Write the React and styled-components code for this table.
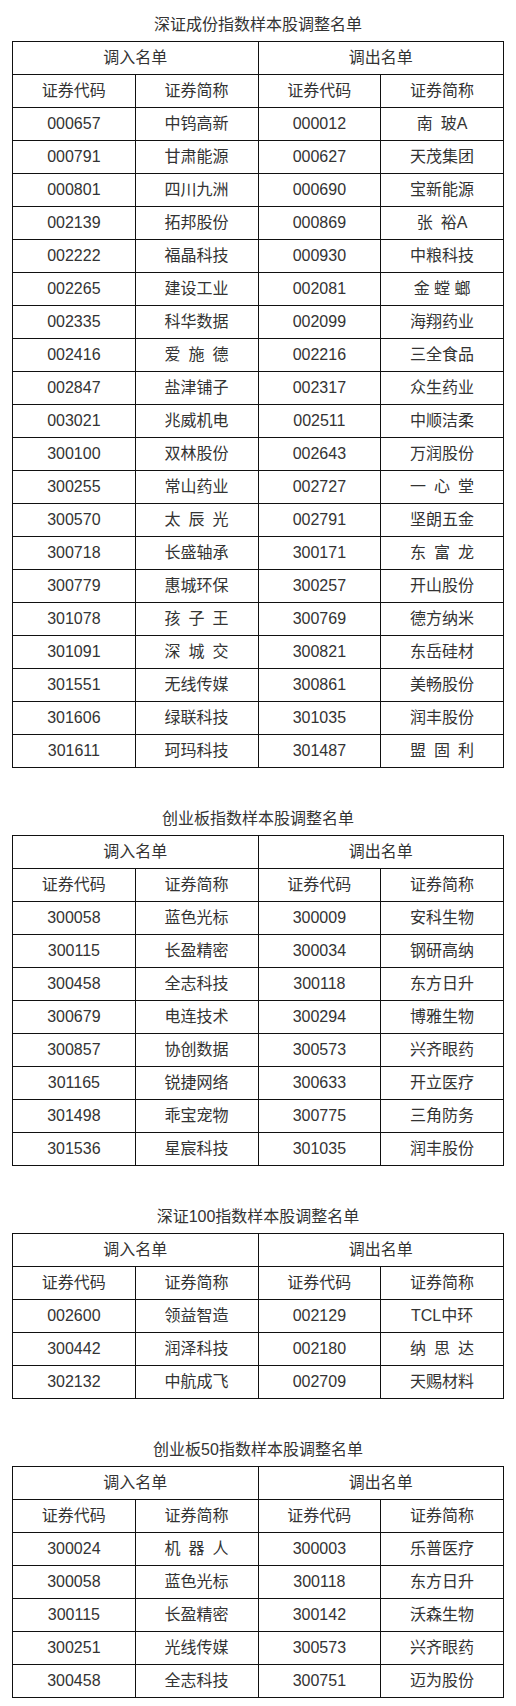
import React from "react";
import styled, { createGlobalStyle } from "styled-components";

const GlobalStyle = createGlobalStyle`
  html, body {
    margin: 0;
    padding: 0;
    background: #fff;
  }
  body {
    font-family: "Liberation Sans", "Noto Sans CJK SC", sans-serif;
    color: #333;
  }
`;

const Page = styled.div`
  width: 516px;
  padding: 9px 0 12px;
  display: flex;
  flex-direction: column;
  gap: 35px;
`;

const Section = styled.section`
  display: flex;
  flex-direction: column;
  align-items: center;
`;

const Title = styled.h2`
  margin: 0;
  height: 32px;
  line-height: 32px;
  font-size: 16px;
  font-weight: 400;
  color: #333;
`;

const Table = styled.table`
  width: 492px;
  border-collapse: collapse;
  table-layout: fixed;
  font-size: 16px;
  color: #333;
`;

const Cell = styled.td`
  height: 32px;
  padding: 0;
  border: 1px solid #111;
  text-align: center;
  vertical-align: middle;
  white-space: pre;
  line-height: 20px;
`;

const E = "\u2002";

const lists = [
  {
    title: "深证成份指数样本股调整名单",
    rows: [
      ["000657", "中钨高新", "000012", "南" + E + "玻A"],
      ["000791", "甘肃能源", "000627", "天茂集团"],
      ["000801", "四川九洲", "000690", "宝新能源"],
      ["002139", "拓邦股份", "000869", "张" + E + "裕A"],
      ["002222", "福晶科技", "000930", "中粮科技"],
      ["002265", "建设工业", "002081", "金 螳 螂"],
      ["002335", "科华数据", "002099", "海翔药业"],
      ["002416", "爱" + E + "施" + E + "德", "002216", "三全食品"],
      ["002847", "盐津铺子", "002317", "众生药业"],
      ["003021", "兆威机电", "002511", "中顺洁柔"],
      ["300100", "双林股份", "002643", "万润股份"],
      ["300255", "常山药业", "002727", "一" + E + "心" + E + "堂"],
      ["300570", "太" + E + "辰" + E + "光", "002791", "坚朗五金"],
      ["300718", "长盛轴承", "300171", "东" + E + "富" + E + "龙"],
      ["300779", "惠城环保", "300257", "开山股份"],
      ["301078", "孩" + E + "子" + E + "王", "300769", "德方纳米"],
      ["301091", "深" + E + "城" + E + "交", "300821", "东岳硅材"],
      ["301551", "无线传媒", "300861", "美畅股份"],
      ["301606", "绿联科技", "301035", "润丰股份"],
      ["301611", "珂玛科技", "301487", "盟" + E + "固" + E + "利"],
    ],
  },
  {
    title: "创业板指数样本股调整名单",
    rows: [
      ["300058", "蓝色光标", "300009", "安科生物"],
      ["300115", "长盈精密", "300034", "钢研高纳"],
      ["300458", "全志科技", "300118", "东方日升"],
      ["300679", "电连技术", "300294", "博雅生物"],
      ["300857", "协创数据", "300573", "兴齐眼药"],
      ["301165", "锐捷网络", "300633", "开立医疗"],
      ["301498", "乖宝宠物", "300775", "三角防务"],
      ["301536", "星宸科技", "301035", "润丰股份"],
    ],
  },
  {
    title: "深证100指数样本股调整名单",
    rows: [
      ["002600", "领益智造", "002129", "TCL中环"],
      ["300442", "润泽科技", "002180", "纳" + E + "思" + E + "达"],
      ["302132", "中航成飞", "002709", "天赐材料"],
    ],
  },
  {
    title: "创业板50指数样本股调整名单",
    rows: [
      ["300024", "机" + E + "器" + E + "人", "300003", "乐普医疗"],
      ["300058", "蓝色光标", "300118", "东方日升"],
      ["300115", "长盈精密", "300142", "沃森生物"],
      ["300251", "光线传媒", "300573", "兴齐眼药"],
      ["300458", "全志科技", "300751", "迈为股份"],
    ],
  },
];

const ChangeTable = ({ title, rows }) => (
  <Section>
    <Title>{title}</Title>
    <Table>
      <colgroup>
        <col />
        <col />
        <col />
        <col />
      </colgroup>
      <tbody>
        <tr>
          <Cell colSpan={2}>调入名单</Cell>
          <Cell colSpan={2}>调出名单</Cell>
        </tr>
        <tr>
          <Cell>证券代码</Cell>
          <Cell>证券简称</Cell>
          <Cell>证券代码</Cell>
          <Cell>证券简称</Cell>
        </tr>
        {rows.map((r, i) => (
          <tr key={i}>
            {r.map((c, j) => (
              <Cell key={j}>{c}</Cell>
            ))}
          </tr>
        ))}
      </tbody>
    </Table>
  </Section>
);

export default function App() {
  return (
    <>
      <GlobalStyle />
      <Page>
        {lists.map((l) => (
          <ChangeTable key={l.title} title={l.title} rows={l.rows} />
        ))}
      </Page>
    </>
  );
}
